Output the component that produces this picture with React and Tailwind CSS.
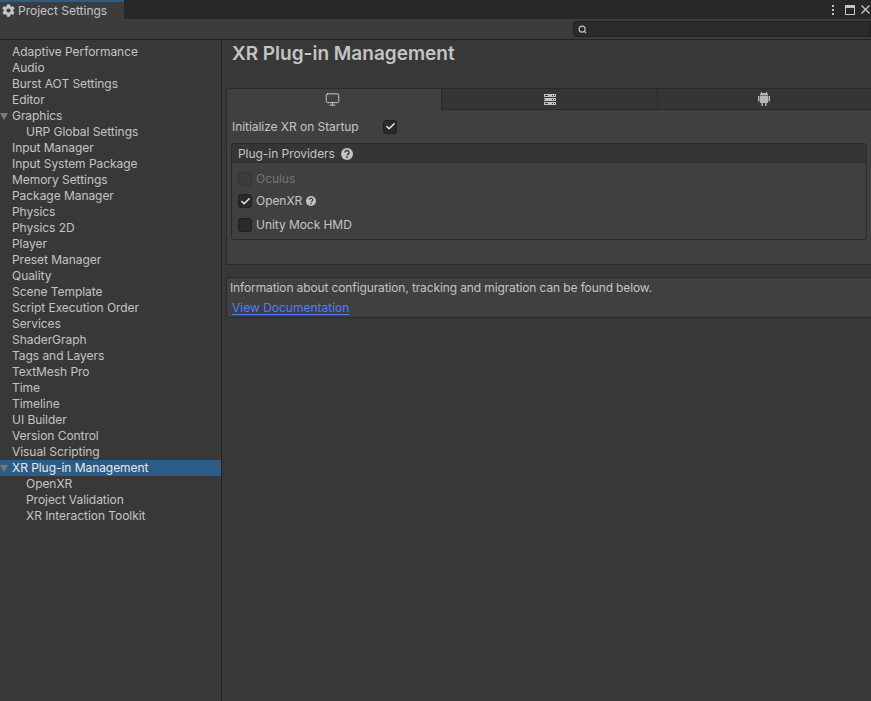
import { Search, Monitor, Check } from "lucide-react";
import { FaCog } from "react-icons/fa";

const items = [
  { name: "Adaptive Performance" },
  { name: "Audio" },
  { name: "Burst AOT Settings" },
  { name: "Editor" },
  { name: "Graphics", open: true },
  { name: "URP Global Settings", sub: true },
  { name: "Input Manager" },
  { name: "Input System Package" },
  { name: "Memory Settings" },
  { name: "Package Manager" },
  { name: "Physics" },
  { name: "Physics 2D" },
  { name: "Player" },
  { name: "Preset Manager" },
  { name: "Quality" },
  { name: "Scene Template" },
  { name: "Script Execution Order" },
  { name: "Services" },
  { name: "ShaderGraph" },
  { name: "Tags and Layers" },
  { name: "TextMesh Pro" },
  { name: "Time" },
  { name: "Timeline" },
  { name: "UI Builder" },
  { name: "Version Control" },
  { name: "Visual Scripting" },
  { name: "XR Plug-in Management", open: true, selected: true },
  { name: "OpenXR", sub: true },
  { name: "Project Validation", sub: true },
  { name: "XR Interaction Toolkit", sub: true },
];

function Row({ item }) {
  return (
    <div
      className={`relative h-4 leading-4 whitespace-nowrap ${item.sub ? "pl-[26px]" : "pl-3"} ${
        item.selected ? "bg-[#2c5d87] text-[#e8e8e8]" : "text-[#c4c4c4]"
      }`}
    >
      {item.open && (
        <span className="absolute left-0 top-[5px] w-0 h-0 border-x-[4px] border-x-transparent border-t-[7px] border-t-[#7a7a7a]" />
      )}
      {item.name}
    </div>
  );
}

function Checkbox({ checked, disabled }) {
  return (
    <span
      className={`flex items-center justify-center w-[14px] h-[14px] rounded-[3px] border shrink-0 ${
        disabled ? "bg-[#3c3c3c] border-[#353535]" : "bg-[#2a2a2a] border-[#212121]"
      }`}
    >
      {checked && <Check size={11} strokeWidth={3} className="text-[#eeeeee]" />}
    </span>
  );
}

function Help({ size }) {
  return (
    <svg width={size} height={size} viewBox="0 0 12 12" className="shrink-0">
      <circle cx="6" cy="6" r="6" fill="#c4c4c4" />
      <path d="M4 4.600a2 2 0 1 1 3 1.700c-.7.4-1 .7-1 1.300" fill="none" stroke="#3c3c3c" strokeWidth="1.500" />
      <rect x="5.200" y="8.400" width="1.600" height="1.600" fill="#3c3c3c" />
    </svg>
  );
}

function ServerIcon() {
  return (
    <svg width="12" height="11" viewBox="0 0 12 11" className="text-[#c4c4c4]">
      <path fill="currentColor" d="M0 0h12v3H0zM0 4h12v3H0zM0 8h12v3H0z" />
      <path fill="#353535" d="M8 1h1v1H8zM10 1h1v1h-1zM8 5h1v1H8zM10 5h1v1h-1zM8 9h1v1H8zM10 9h1v1h-1zM1 1h3v1H1zM1 9h3v1H1zM1 3h3v1H1zM1 7h3v1H1z" />
      <path fill="#353535" d="M0 5h1v1H0z" />
    </svg>
  );
}

function AndroidIcon() {
  return (
    <svg width="12" height="14" viewBox="0 0 12 14" className="text-[#b4b4b4]">
      <path
        fill="currentColor"
        d="M3 0h1v1h4V0h1v1l1 1v1.500H2V2l1-1zM2 4h8v7H8.500v3h-1.500v-3H5v3H3.500v-3H2zM0 4h1.500v5.500H0zM10.500 4H12v5.500h-1.500z"
      />
    </svg>
  );
}

export default function App() {
  return (
    <div className="w-[871px] h-[701px] overflow-hidden flex flex-col bg-[#383838] text-[12px] tracking-[-0.05px] text-[#c4c4c4] font-['Inter',sans-serif]">
      {/* title bar */}
      <div className="h-[19px] flex bg-[#282828] shrink-0">
        <div className="w-[124px] bg-[#3c3c3c] border-t-2 border-[#2c5d87] flex items-center gap-[3px] pl-[2px]">
          <FaCog size={13} className="text-[#c4c4c4]" />
          <span className="leading-none tracking-normal whitespace-nowrap">Project Settings</span>
        </div>
        <div className="ml-auto flex items-center text-[#c4c4c4]">
          <span className="flex flex-col gap-[2px] mr-[11px]">
            <span className="w-[2px] h-[2px] bg-[#c4c4c4]" />
            <span className="w-[2px] h-[2px] bg-[#c4c4c4]" />
            <span className="w-[2px] h-[2px] bg-[#c4c4c4]" />
          </span>
          <span className="w-[10px] h-[10px] border border-[#c4c4c4] border-t-[3px]" />
          <svg width="9" height="9" viewBox="0 0 9 9" className="ml-[6px] mr-px">
            <path d="M.5.500l8 8M8.500.500l-8 8" stroke="#c4c4c4" strokeWidth="1.400" />
          </svg>
        </div>
      </div>

      {/* toolbar */}
      <div className="h-[21px] shrink-0 flex items-center justify-end bg-[#3c3c3c] border-b border-[#232323]">
        <div className="w-[298px] h-[16px] flex items-center pl-[4px] rounded-l-[4px] bg-[#2a2a2a] border border-[#212121]">
          <Search size={9} strokeWidth={3} className="text-[#c4c4c4]" />
        </div>
      </div>

      <div className="flex-1 flex min-h-0">
        {/* settings list */}
        <div className="w-[222px] shrink-0 border-r border-[#232323] pt-1">
          {items.map((item) => (
            <Row key={item.name} item={item} />
          ))}
        </div>

        {/* main */}
        <div className="flex-1 min-w-0 pl-1">
          <h1 className="pl-[6px] pt-[2px] h-[48px] text-[19px] leading-[24px] font-semibold tracking-normal text-[#c4c4c4]">
            XR Plug-in Management
          </h1>

          <div className="h-[177px] bg-[#404040] border border-r-0 border-[#2a2a2a] rounded-tl-[4px]">
            <div className="flex h-[21px] border-b border-[#2a2a2a]">
              <div className="relative w-[214px] -mb-px h-[21px] flex items-center justify-center pr-1 bg-[#404040] rounded-tl-[4px]">
                <Monitor size={15} strokeWidth={1.5} className="text-[#d0d0d0]" />
              </div>
              <div className="w-[216px] flex items-center justify-center bg-[#353535] border-l border-[#2a2a2a]">
                <ServerIcon />
              </div>
              <div className="flex-1 flex items-center justify-center pr-[2px] bg-[#353535] border-l border-[#2a2a2a]">
                <AndroidIcon />
              </div>
            </div>

            <div className="h-[33px] flex items-center pl-[5px]">
              <span className="w-[151px] whitespace-nowrap">Initialize XR on Startup</span>
              <Checkbox checked />
            </div>

            <div className="ml-1 mr-1 h-[97px] border border-[#2a2a2a] rounded-[3px]">
              <div className="h-[19px] flex items-center gap-[6px] pl-[6px] pt-px bg-[#353535] border-b border-[#2a2a2a] rounded-t-[3px]">
                <span className="whitespace-nowrap">Plug-in Providers</span>
                <Help size={12} />
              </div>
              <div className="h-[22px] mt-[5px] flex items-center gap-[4px] pl-[6px] text-[#757575]">
                <Checkbox disabled />
                <span>Oculus</span>
              </div>
              <div className="h-[22px] flex items-center gap-[4px] pl-[6px]">
                <Checkbox checked />
                <span>OpenXR</span>
                <Help size={10} />
              </div>
              <div className="h-[26px] flex items-center gap-[4px] pl-[6px]">
                <Checkbox />
                <span className="whitespace-nowrap">Unity Mock HMD</span>
              </div>
            </div>
          </div>

          <div className="mt-3 h-[41px] border border-r-0 border-[#2a2a2a] rounded-l-[3px] bg-[#404040] pl-[3px]">
            <div className="h-[19px] leading-[19px] tracking-[-0.12px] whitespace-nowrap">
              Information about configuration, tracking and migration can be found below.
            </div>
            <a className="inline-block mt-1 ml-[2px] leading-[13px] tracking-normal text-[#4c7eff] border-b border-[#4c7eff] whitespace-nowrap">
              View Documentation
            </a>
          </div>
        </div>
      </div>
    </div>
  );
}
